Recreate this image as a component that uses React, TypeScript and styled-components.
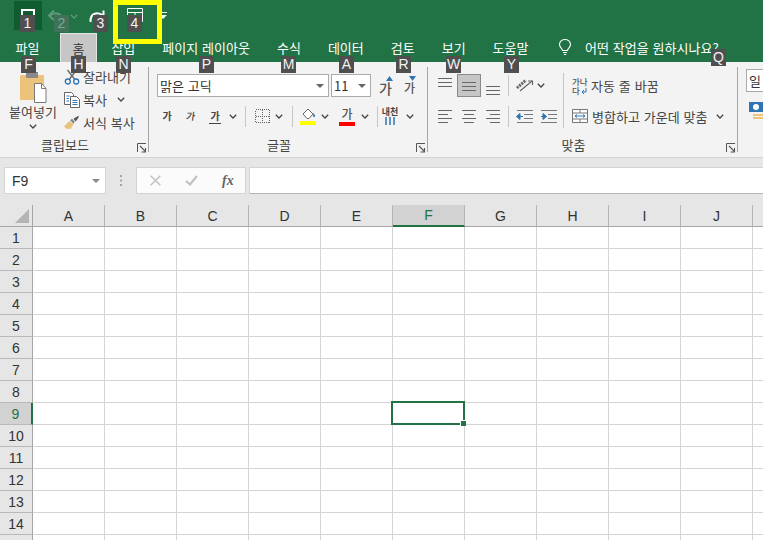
import React from "react";
import styled, { createGlobalStyle } from "styled-components";

const GREEN = "#217346";
const KR = `"Noto Sans CJK KR", "Noto Sans", sans-serif`;
const LATIN = `"Liberation Sans", Arial, sans-serif`;

const Global = createGlobalStyle`
  html, body { margin: 0; padding: 0; background: #e6e6e6; }
  body { font-family: ${KR}; color: #333; }
`;

const Page = styled.div`
  position: relative;
  width: 763px;
  height: 540px;
  overflow: hidden;
  display: flex;
  flex-direction: column;
  background: #e6e6e6;
`;

/* title + tabs */
const Head = styled.header`
  background: ${GREEN};
  height: 62px;
  flex: none;
`;

const QuickBar = styled.div`
  height: 33px;
  display: flex;
  align-items: flex-start;
  padding-left: 14px;
`;

const QuickBtn = styled.div<{ $w: number; $on?: boolean; $pt?: number }>`
  width: ${(p) => p.$w}px;
  height: 29px;
  margin-top: 1px;
  display: flex;
  align-items: flex-start;
  justify-content: center;
  padding-top: ${(p) => p.$pt ?? 7}px;
  box-sizing: border-box;
  background: ${(p) => (p.$on ? "#0f5c30" : "transparent")};
`;

const TabRow = styled.nav`
  height: 29px;
  display: flex;
  gap: 2px;
  padding-left: 3px;
  color: #fff;
  font-size: 13px;
  word-spacing: 1px;
`;

const Tab = styled.div<{ $active?: boolean }>`
  padding: 0 12.5px;
  display: flex;
  align-items: center;
  white-space: nowrap;
  box-sizing: border-box;
  ${(p) =>
    p.$active &&
    `background:#c6c6c6;color:#333;border:1px solid #e4e4e4;border-bottom:0;padding:0 11.5px;`}
  &:first-child {
    margin-right: 6px;
  }
`;

const TellMe = styled.div`
  display: flex;
  align-items: center;
  gap: 13px;
  margin-left: 15px;
  white-space: nowrap;
`;

/* ribbon */
const Ribbon = styled.section`
  height: 95px;
  flex: none;
  display: flex;
  background: #f3f3f3;
  border-bottom: 1px solid #d2d2d2;
  box-sizing: content-box;
  font-size: 13px;
  color: #444;
  word-spacing: 1px;
`;

const Group = styled.div<{ $w: number }>`
  position: relative;
  flex: none;
  width: ${(p) => p.$w}px;
  margin: 5px 0;
  box-sizing: border-box;
  border-right: 1px solid #a6a6a6;
  display: flex;
  flex-direction: column;
`;

const GroupBody = styled.div`
  flex: 1;
  min-height: 0;
  display: flex;
`;

const GroupLabel = styled.div`
  position: relative;
  height: 17px;
  line-height: 19px;
  padding-right: 18px;
  text-align: center;
  white-space: nowrap;
`;

const Launcher = styled.span`
  position: absolute;
  right: 1px;
  bottom: -1px;
  line-height: 0;
`;

const PasteBtn = styled.div`
  width: 60px;
  margin-left: 3px;
  display: flex;
  flex-direction: column;
  align-items: center;
  padding-top: 4px;
  white-space: nowrap;
`;

const PasteIconSlot = styled.span`
  margin-left: 2px;
  line-height: 0;
`;

const PasteLabel = styled.div`
  margin-top: -2px;
  margin-bottom: 2px;
  height: 21px;
  line-height: 21px;
`;

const SmallList = styled.div`
  display: flex;
  flex-direction: column;
  margin-top: -2px;
`;

const SmallRow = styled.div`
  height: 23px;
  display: flex;
  align-items: center;
  gap: 3px;
  white-space: nowrap;
`;

const IconSlot = styled.span<{ $w: number }>`
  width: ${(p) => p.$w}px;
  flex: none;
  display: flex;
  align-items: center;
  justify-content: center;
  line-height: 0;
`;

const Column = styled.div`
  display: flex;
  flex-direction: column;
  padding-top: 7px;
`;

const Row = styled.div<{ $h?: number; $mt?: number; $ml?: number }>`
  height: ${(p) => p.$h ?? 23}px;
  margin-top: ${(p) => p.$mt ?? 0}px;
  margin-left: ${(p) => p.$ml ?? 0}px;
  display: flex;
  align-items: center;
  white-space: nowrap;
`;

const Combo = styled.div<{ $w: number; $ml?: number }>`
  width: ${(p) => p.$w}px;
  height: 23px;
  margin-left: ${(p) => p.$ml ?? 0}px;
  box-sizing: border-box;
  background: #fff;
  border: 1px solid #ababab;
  display: flex;
  align-items: center;
  justify-content: space-between;
  padding: 0 4px 0 2px;
  color: #333;
  flex: none;
`;

const Tool = styled.div<{ $w: number; $ml?: number; $on?: boolean }>`
  width: ${(p) => p.$w}px;
  height: 23px;
  margin-left: ${(p) => p.$ml ?? 0}px;
  box-sizing: border-box;
  flex: none;
  display: flex;
  align-items: center;
  justify-content: center;
  line-height: 0;
  ${(p) => p.$on && `background:#c6c6c6;border:1px solid #8a8a8a;`}
`;

const Ga = styled.span<{ $u?: boolean; $i?: boolean }>`
  font-size: 10px;
  line-height: 14px;
  font-weight: 700;
  color: #444;
  ${(p) => p.$u && `border-bottom:1px solid #444;padding:0 1px;`}
  ${(p) => p.$i && `font-weight:500;transform:skewX(-8deg);`}
`;

const Divider = styled.span<{ $ml: number; $mr: number; $h?: number }>`
  flex: none;
  width: 1px;
  height: ${(p) => p.$h ?? 21}px;
  margin: 0 ${(p) => p.$mr}px 0 ${(p) => p.$ml}px;
  background: #c6c6c6;
`;

const TallDivider = styled.span`
  flex: none;
  width: 1px;
  height: 55px;
  margin-top: 6px;
  background: #c6c6c6;
`;

const AlignLeft = styled(Column)`
  width: 130px;
  margin-left: 5px;
  flex: none;
`;

const WrapColumn = styled(Column)`
  margin-left: 8px;
`;

const WrapRow = styled(Row)`
  gap: 4px;
`;

/* formula bar */
const FormulaBar = styled.div`
  flex: none;
  height: 27px;
  margin-top: 9px;
  display: flex;
  padding-left: 4px;
  font-family: ${LATIN};
`;

const NameBox = styled.div`
  width: 102px;
  box-sizing: border-box;
  background: #fff;
  border: 1px solid #d4d4d4;
  display: flex;
  align-items: center;
  justify-content: space-between;
  padding: 0 5px 0 7px;
  font-size: 14px;
  color: #333;
`;

const Grip = styled.div`
  width: 30px;
  display: flex;
  align-items: center;
  justify-content: center;
  line-height: 0;
`;

const FxBox = styled.div`
  width: 110px;
  box-sizing: border-box;
  background: #fbfbfb;
  border: 1px solid #d4d4d4;
  display: flex;
  align-items: center;
  gap: 24px;
  padding-left: 13px;
`;

const FxText = styled.span`
  font-family: "Liberation Serif", serif;
  font-style: italic;
  font-weight: 700;
  font-size: 14px;
  color: #666;
`;

const FormulaInput = styled.div`
  flex: 1;
  margin-left: 3px;
  background: #fff;
  border: 1px solid #d4d4d4;
  border-right: 0;
  border-bottom: 1px solid #b4b4b4;
`;

/* sheet */
const Sheet = styled.div`
  margin-top: 11px;
  flex: none;
  display: grid;
  grid-template-columns: 33px repeat(11, 72px);
  grid-auto-rows: 22px;
  font-family: ${LATIN};
  font-size: 14px;
  color: #333;
  background: #fff;
`;

const Corner = styled.div`
  background: #e6e6e6;
  border-right: 1px solid #a6a6a6;
  border-bottom: 1px solid #a6a6a6;
  display: flex;
  align-items: flex-end;
  justify-content: flex-end;
  padding: 0 3px 3px 0;
`;

const ColHead = styled.div<{ $sel?: boolean }>`
  box-sizing: border-box;
  display: flex;
  align-items: center;
  justify-content: center;
  background: ${(p) => (p.$sel ? "#d2d2d2" : "#e6e6e6")};
  color: ${(p) => (p.$sel ? GREEN : "#333")};
  border-right: 1px solid #b4b4b4;
  border-bottom: ${(p) => (p.$sel ? `2px solid ${GREEN}` : "1px solid #a6a6a6")};
`;

const RowHead = styled.div<{ $sel?: boolean }>`
  box-sizing: border-box;
  display: flex;
  align-items: center;
  justify-content: center;
  background: ${(p) => (p.$sel ? "#d2d2d2" : "#e6e6e6")};
  color: ${(p) => (p.$sel ? GREEN : "#333")};
  border-right: ${(p) => (p.$sel ? `2px solid ${GREEN}` : "1px solid #a6a6a6")};
  border-bottom: 1px solid #b9b9b9;
`;

const Cell = styled.div`
  position: relative;
  box-sizing: border-box;
  border-right: 1px solid #d4d4d4;
  border-bottom: 1px solid #d4d4d4;
`;

const Selection = styled.div`
  position: absolute;
  left: -2px;
  top: -2px;
  right: -1px;
  bottom: -1px;
  border: 2px solid ${GREEN};
  z-index: 2;
`;

const Handle = styled.span`
  position: absolute;
  right: -3px;
  bottom: -3px;
  width: 5px;
  height: 5px;
  background: ${GREEN};
  box-shadow: -1px -1px 0 #fff;
`;

/* overlays */
const KeyTip = styled.span<{ $x: number; $y: number; $dim?: boolean }>`
  position: absolute;
  left: ${(p) => p.$x}px;
  top: ${(p) => p.$y}px;
  width: 15px;
  height: 17px;
  background: #4f4f4f;
  color: #f2f2f2;
  font-family: ${LATIN};
  font-size: 14px;
  line-height: 17px;
  text-align: center;
  z-index: 5;
  ${(p) => p.$dim && `background:#3f7258;color:#7fa893;`}
`;

const Highlight = styled.div`
  position: absolute;
  left: 113px;
  top: 0;
  width: 49px;
  height: 44px;
  box-sizing: border-box;
  border: 5px solid #ffff00;
  z-index: 6;
`;

/* drawings */
const Chevron = ({ color = "#444" }: { color?: string }) => (
  <svg width="8" height="5" viewBox="0 0 8 5">
    <path d="M.8.8 4 4 7.2.8" fill="none" stroke={color} strokeWidth="1.3" />
  </svg>
);

const DownTri = ({ color = "#666" }: { color?: string }) => (
  <svg width="8" height="4" viewBox="0 0 8 4">
    <path d="M0 0h8L4 4z" fill={color} />
  </svg>
);

const LauncherIcon = () => (
  <svg width="10" height="10" viewBox="0 0 10 10">
    <path d="M.5 9V.5H9" fill="none" stroke="#555" />
    <path d="M3 3l5 5M8.500 5v4h-4" fill="none" stroke="#555" strokeWidth="1.100" />
  </svg>
);

const Save = () => (
  <svg width="14" height="16" viewBox="0 0 14 16">
    <path d="M1 16V1h12v15" fill="none" stroke="#fff" strokeWidth="2" />
  </svg>
);

const Undo = ({ color }: { color: string }) => (
  <svg width="18" height="15" viewBox="0 0 18 15">
    <path d="M3 6.500C8 2.500 16 3.500 15.500 13" fill="none" stroke={color} strokeWidth="2" />
    <path d="M7 1.500 2 6.500l5 4.500" fill="none" stroke={color} strokeWidth="2" />
  </svg>
);

const Redo = ({ color }: { color: string }) => (
  <svg width="18" height="15" viewBox="0 0 18 15">
    <path d="M2.500 13C2 3.500 10 2.500 15 6.500" fill="none" stroke={color} strokeWidth="2" />
    <path d="M15.500 1.500v6h-6" fill="none" stroke={color} strokeWidth="2" />
  </svg>
);

const TableIcon = () => (
  <svg width="16" height="14" viewBox="0 0 16 14">
    <path d="M.5.500h15v13H.5zM.5 4.500h15M8 4.500v9" fill="none" stroke="#fff" />
  </svg>
);

const CustomizeArrow = () => (
  <svg width="8" height="7" viewBox="0 0 8 7">
    <path d="M0 .5h8" stroke="#fff" />
    <path d="M0 3h8L4 7z" fill="#fff" />
  </svg>
);

const Bulb = () => (
  <svg width="14" height="17" viewBox="0 0 14 17">
    <path
      d="M4.500 11.500C4.500 9.500 1.500 8.500 1.500 5.500a5.500 5 0 0 1 11 0c0 3-3 4-3 6zM5 13.500h4M5.800 15.500h2.400"
      fill="none"
      stroke="#fff"
      strokeWidth="1.100"
    />
  </svg>
);

const PasteIcon = () => (
  <svg width="30" height="32" viewBox="0 0 30 32">
    <rect x="1" y="4" width="24" height="25" rx="1" fill="#edc37c" />
    <rect x="7" y="1" width="12" height="6" fill="#8a8a8a" />
    <path d="M15.500 12.500h7l4.500 5v14h-11.500z" fill="#fff" stroke="#7a7a7a" />
    <path d="M22.500 12.500v5H27" fill="none" stroke="#7a7a7a" />
  </svg>
);

const Scissors = () => (
  <svg width="16" height="16" viewBox="0 0 16 16">
    <path d="M3.500 1l7 9M12.500 1l-7 9" stroke="#666" strokeWidth="1.300" fill="none" />
    <circle cx="3.800" cy="12.500" r="2.500" fill="none" stroke="#2f75b5" strokeWidth="1.300" />
    <circle cx="12.200" cy="12.500" r="2.500" fill="none" stroke="#2f75b5" strokeWidth="1.300" />
  </svg>
);

const CopyIcon = () => (
  <svg width="16" height="16" viewBox="0 0 16 16">
    <path d="M.5.500h7l2 2v10H.5z" fill="#fff" stroke="#666" />
    <path d="M6.500 4.500h6l3 3v8h-9z" fill="#fff" stroke="#666" />
    <path d="M2.500 4h3M2.500 6.500h2.500M2.500 9h2.500M8.500 8.500h5M8.500 10.500h5M8.500 12.500h5" stroke="#2f75b5" />
  </svg>
);

const Brush = () => (
  <svg width="18" height="15" viewBox="0 0 18 15">
    <path d="M1 11.500 7 6l4 4-3 4.500-3-.5-1 .5z" fill="#e8c27a" />
    <path d="M7.500 5l2-1.500 3 3L11 9z" fill="#8a8a8a" />
    <path d="M11 3.500 16 .5l1 1-3.500 5z" fill="#555" />
  </svg>
);

const GrowIcon = ({ shrink }: { shrink?: boolean }) => (
  <svg width="7" height="5" viewBox="0 0 7 5">
    <path d={shrink ? "M0 0h7L3.500 5z" : "M0 5h7L3.500 0z"} fill="#2f75b5" />
  </svg>
);

const GrowBtn = styled.span<{ $big?: boolean }>`
  position: relative;
  font-size: ${(p) => (p.$big ? 14 : 12)}px;
  line-height: 16px;
  font-weight: 500;
  color: #555;
  padding-top: 4px;
  & > svg {
    position: absolute;
    right: -1px;
    top: 0;
  }
`;

const BorderIcon = () => (
  <svg width="15" height="14" viewBox="0 0 15 14" shapeRendering="crispEdges">
    <path d="M.5.500h14v13H.5zM7.500.500v13M.5 7h14" fill="none" stroke="#666" strokeDasharray="1 1" />
  </svg>
);

const FillIcon = () => (
  <svg width="17" height="18" viewBox="0 0 17 18">
    <path d="M3 7l5-5 5 5-4 4.500H7z" fill="#fff" stroke="#666" />
    <path d="M13.500 6c1 1.500 2 2.500 1.500 3.500-.5.800-2 .5-2-.5z" fill="#2f75b5" />
    <rect x="0" y="14" width="16" height="4" fill="#ffff00" />
  </svg>
);

const ColorBar = styled.span`
  display: block;
  width: 16px;
  height: 4px;
  margin-top: 1px;
  background: #ff0000;
`;

const ColorBtn = styled.span`
  display: flex;
  flex-direction: column;
  align-items: center;
  font-size: 12px;
  line-height: 14px;
  font-weight: 500;
  color: #555;
`;

const PhoneticBtn = styled.span`
  display: flex;
  flex-direction: column;
  align-items: center;
  font-size: 9px;
  line-height: 10px;
  font-weight: 700;
  color: #444;
`;

const Phonetic = () => (
  <svg width="12" height="8" viewBox="0 0 12 8">
    <path d="M2 0v8M6 0v8M10 0v8" stroke="#2f75b5" strokeWidth="1.500" />
  </svg>
);

const Lines = ({ rows }: { rows: [number, number, number][] }) => (
  <svg width="16" height="18" viewBox="0 0 16 18">
    {rows.map(([a, b, y]) => (
      <path key={`${a}-${y}`} d={`M${a} ${y}.5H${b}`} stroke="#666" />
    ))}
  </svg>
);

const Orient = () => (
  <svg width="18" height="18" viewBox="0 0 18 18">
    <path d="M1 11l9-8" stroke="#666" strokeWidth="3" strokeDasharray="2 1" />
    <path d="M4 14 16 4" stroke="#666" strokeWidth="1.200" />
    <path d="M12 4h4.500v4" fill="none" stroke="#666" strokeWidth="1.200" />
  </svg>
);

const IndentIcon = ({ inc }: { inc?: boolean }) => (
  <svg width="17" height="13" viewBox="0 0 17 13">
    <path d="M1 .5h16M8 4.500h9M8 8.500h9M1 12.500h16" stroke="#777" />
    <path
      d={inc ? "M1 6.500h3.500M3 3.500l3.500 3-3.500 3z" : "M7 6.500H3.500M4 3.500l-3.500 3 3.500 3z"}
      stroke="#2f75b5"
      fill="#2f75b5"
    />
  </svg>
);

const WrapIcon = styled.span`
  position: relative;
  width: 15px;
  height: 18px;
  font-size: 8.500px;
  line-height: 9px;
  font-weight: 500;
  color: #555;
  word-spacing: 0;
  & > svg {
    position: absolute;
    right: 0;
    bottom: 1px;
  }
`;

const WrapArrow = () => (
  <svg width="6" height="6" viewBox="0 0 6 6">
    <path d="M5 0v4H1M3 2 1 4l2 2" fill="none" stroke="#2f75b5" />
  </svg>
);

const MergeIcon = () => (
  <svg width="16" height="16" viewBox="0 0 16 16">
    <path d="M.5 1.500h15v13H.5zM.5 5h15M.5 11h15M8 1.500V5M8 11v3.500" fill="#fff" stroke="#777" />
    <path d="M3 8h10M5 6.500 3 8l2 1.500M11 6.500 13 8l-2 1.500" fill="none" stroke="#2f75b5" />
  </svg>
);

const CondIcon = () => (
  <svg width="17" height="18" viewBox="0 0 17 18">
    <rect x="0" y="0" width="17" height="10" fill="#2f75b5" />
    <circle cx="7" cy="5" r="3" fill="#fff" />
    <rect x="4" y="12" width="10" height="2" fill="#edc37c" />
    <rect x="4" y="15" width="10" height="2" fill="#edc37c" />
  </svg>
);

const Check = () => (
  <svg width="13" height="11" viewBox="0 0 13 11">
    <path d="M1 6l4 3.500L12 1" fill="none" stroke="#c2c2c2" strokeWidth="2.200" />
  </svg>
);

const Cross = () => (
  <svg width="11" height="11" viewBox="0 0 11 11">
    <path d="M.7.700l9.600 9.600M10.300.700.7 10.300" stroke="#c2c2c2" strokeWidth="1.500" />
  </svg>
);

const Dots = () => (
  <svg width="3" height="11" viewBox="0 0 3 11">
    <path d="M0 0h2v2H0zM0 4.500h2v2H0zM0 9h2v2H0z" fill="#a6a6a6" />
  </svg>
);

const COLS = ["A", "B", "C", "D", "E", "F", "G", "H", "I", "J", ""];
const ROWS = Array.from({ length: 15 }, (_, i) => i + 1);
const TABS = ["파일", "홈", "삽입", "페이지 레이아웃", "수식", "데이터", "검토", "보기", "도움말"];

const TIPS: [string, number, number, boolean?][] = [
  ["1", 20, 15],
  ["2", 54, 15, true],
  ["3", 93, 15],
  ["4", 127, 15],
  ["F", 21, 56],
  ["H", 71, 56],
  ["N", 116, 56],
  ["P", 199, 56],
  ["M", 281, 56],
  ["A", 339, 56],
  ["R", 396, 56],
  ["W", 446, 56],
  ["Y", 504, 56],
  ["Q", 711, 49],
];

export default function App() {
  return (
    <Page>
      <Global />
      <Head>
        <QuickBar>
          <QuickBtn $w={28} $on $pt={8}><Save /></QuickBtn>
          <QuickBtn $w={28} $pt={8}><Undo color="#5f9a7a" /></QuickBtn>
          <QuickBtn $w={8} $pt={13}><Chevron color="#5f9a7a" /></QuickBtn>
          <QuickBtn $w={38} $pt={8}><Redo color="#fff" /></QuickBtn>
          <QuickBtn $w={5} />
          <QuickBtn $w={27} $pt={7}><TableIcon /></QuickBtn>
          <QuickBtn $w={30} $pt={11}><CustomizeArrow /></QuickBtn>
        </QuickBar>
        <TabRow>
          {TABS.map((t) => (
            <Tab key={t} $active={t === "홈"}>{t}</Tab>
          ))}
          <TellMe>
            <Bulb />
            어떤 작업을 원하시나요?
          </TellMe>
        </TabRow>
      </Head>

      <Ribbon>
        <Group $w={149}>
          <GroupBody>
            <PasteBtn>
              <PasteIconSlot><PasteIcon /></PasteIconSlot>
              <PasteLabel>붙여넣기</PasteLabel>
              <Chevron />
            </PasteBtn>
            <SmallList>
              <SmallRow><IconSlot $w={17}><Scissors /></IconSlot>잘라내기</SmallRow>
              <SmallRow>
                <IconSlot $w={17}><CopyIcon /></IconSlot>복사
                <IconSlot $w={22}><Chevron /></IconSlot>
              </SmallRow>
              <SmallRow><IconSlot $w={17}><Brush /></IconSlot>서식 복사</SmallRow>
            </SmallList>
          </GroupBody>
          <GroupLabel>
            클립보드
            <Launcher><LauncherIcon /></Launcher>
          </GroupLabel>
        </Group>

        <Group $w={279}>
          <GroupBody>
            <Column>
              <Row $ml={8}>
                <Combo $w={172}>맑은 고딕<DownTri /></Combo>
                <Combo $w={40} $ml={2}>11<DownTri /></Combo>
                <Tool $w={13} $ml={8}><GrowBtn $big>가<GrowIcon /></GrowBtn></Tool>
                <Tool $w={13} $ml={11}><GrowBtn>가<GrowIcon shrink /></GrowBtn></Tool>
              </Row>
              <Row $mt={8} $h={22} $ml={6}>
                <Tool $w={24}><Ga>가</Ga></Tool>
                <Tool $w={24}><Ga $i>가</Ga></Tool>
                <Tool $w={24}><Ga $u>가</Ga></Tool>
                <Tool $w={12}><Chevron /></Tool>
                <Divider $ml={6} $mr={6} />
                <Tool $w={20}><BorderIcon /></Tool>
                <Tool $w={14}><Chevron /></Tool>
                <Divider $ml={6} $mr={6} />
                <Tool $w={18}><FillIcon /></Tool>
                <Tool $w={16}><Chevron /></Tool>
                <Tool $w={28}><ColorBtn>가<ColorBar /></ColorBtn></Tool>
                <Tool $w={8}><Chevron /></Tool>
                <Divider $ml={8} $mr={0} />
                <Tool $w={24}><PhoneticBtn>내천<Phonetic /></PhoneticBtn></Tool>
                <Tool $w={16}><Chevron /></Tool>
              </Row>
            </Column>
          </GroupBody>
          <GroupLabel>
            글꼴
            <Launcher><LauncherIcon /></Launcher>
          </GroupLabel>
        </Group>

        <Group $w={310}>
          <GroupBody>
            <AlignLeft>
              <Row>
                <Tool $w={24}><Lines rows={[[1, 15, 1], [1, 15, 5], [1, 15, 9]]} /></Tool>
                <Tool $w={24} $on><Lines rows={[[1, 15, 5], [1, 15, 9], [1, 15, 13]]} /></Tool>
                <Tool $w={24}><Lines rows={[[1, 15, 9], [1, 15, 13], [1, 15, 17]]} /></Tool>
                <Divider $ml={3} $mr={0} />
                <Tool $w={24} $ml={4}><Orient /></Tool>
                <Tool $w={8}><Chevron /></Tool>
              </Row>
              <Row $mt={8} $h={22}>
                <Tool $w={24}><Lines rows={[[1, 15, 3], [1, 11, 7], [1, 15, 11], [1, 11, 15]]} /></Tool>
                <Tool $w={24}><Lines rows={[[1, 15, 3], [3, 13, 7], [1, 15, 11], [3, 13, 15]]} /></Tool>
                <Tool $w={24}><Lines rows={[[1, 15, 3], [5, 15, 7], [1, 15, 11], [5, 15, 15]]} /></Tool>
                <Divider $ml={3} $mr={0} />
                <Tool $w={17} $ml={7}><IndentIcon /></Tool>
                <Tool $w={17} $ml={7}><IndentIcon inc /></Tool>
              </Row>
            </AlignLeft>
            <TallDivider />
            <WrapColumn>
              <WrapRow>
                <WrapIcon>가나<br />다<WrapArrow /></WrapIcon>
                자동 줄 바꿈
              </WrapRow>
              <WrapRow $mt={8} $h={22}>
                <MergeIcon />
                병합하고 가운데 맞춤
                <IconSlot $w={18}><Chevron /></IconSlot>
              </WrapRow>
            </WrapColumn>
          </GroupBody>
          <GroupLabel>
            맞춤
            <Launcher><LauncherIcon /></Launcher>
          </GroupLabel>
        </Group>

        <Column>
          <Row $ml={8}>
            <Combo $w={60}>일</Combo>
          </Row>
          <Row $mt={8} $h={22} $ml={11}>
            <CondIcon />
          </Row>
        </Column>
      </Ribbon>

      <FormulaBar>
        <NameBox>F9<DownTri color="#888" /></NameBox>
        <Grip><Dots /></Grip>
        <FxBox>
          <Cross />
          <Check />
          <FxText>fx</FxText>
        </FxBox>
        <FormulaInput />
      </FormulaBar>

      <Sheet>
        <Corner>
          <svg width="14" height="14" viewBox="0 0 14 14">
            <path d="M14 0v14H0z" fill="#b4b4b4" />
          </svg>
        </Corner>
        {COLS.map((c, i) => (
          <ColHead key={i} $sel={c === "F"}>{c}</ColHead>
        ))}
        {ROWS.map((r) => (
          <React.Fragment key={r}>
            <RowHead $sel={r === 9}>{r}</RowHead>
            {COLS.map((c, i) => (
              <Cell key={i}>
                {r === 9 && c === "F" && (
                  <Selection>
                    <Handle />
                  </Selection>
                )}
              </Cell>
            ))}
          </React.Fragment>
        ))}
      </Sheet>

      {TIPS.map(([label, x, y, dim]) => (
        <KeyTip key={label} $x={x} $y={y} $dim={dim}>{label}</KeyTip>
      ))}
      <Highlight />
    </Page>
  );
}
